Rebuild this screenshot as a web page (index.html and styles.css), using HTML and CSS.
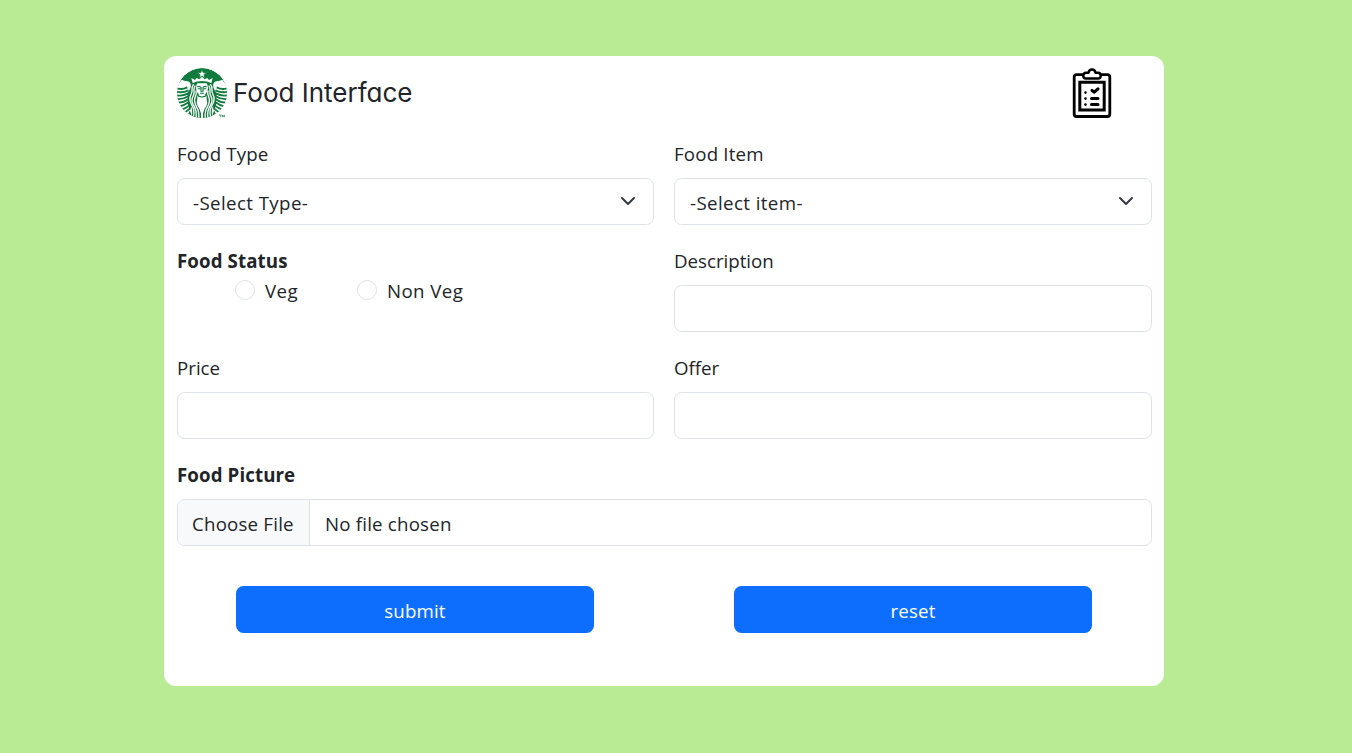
FILE: index.html
```html
<!DOCTYPE html>
<html lang="en">
<head>
<meta charset="utf-8">
<title>Food Interface</title>
<link rel="stylesheet" href="styles.css">
</head>
<body>
<form class="card">
  <header class="header">
    <svg class="logo" viewBox="0 0 150 150" aria-hidden="true">
      <defs>
        <clipPath id="disc"><circle cx="75" cy="75" r="75"/></clipPath>
        <!-- Left half of the siren, mirrored for the right half -->
        <g id="half">
          <path fill="#fff" d="M0 50Q10 44 14 35Q20 38 32 40Q44 44 41 58Q37 69 31 76L33 112L45 145L75 150V80L60 80L28 150L0 130Z"/>
          <g fill="none" stroke="#117a3d" stroke-width="5.4">
            <path d="M0 61Q16 66 31 58M-2 71Q15 76 35 67M0 82Q17 85 34 76M0 93Q18 95 34 85M3 104Q20 104 34 94M8 115Q23 112 35 103M14 125Q26 121 37 112M22 134Q31 129 39 121"/>
          </g>
          <path fill="#117a3d" d="M50 43C37 56 45 65 38 78C30 91 36 105 43 115Q48 130 43 150H72V136Q70 124 62 114Q57 104 61 93L62 45Z"/>
          <g fill="none" stroke="#fff" stroke-width="3.9" stroke-linecap="round">
            <path d="M49 50C40 62 50 67 42 80C34 93 40 104 46 114Q54 130 49 146"/>
            <path d="M54 54C46 67 56 73 48 85C41 98 47 108 53 118Q60 132 57 150"/>
            <path d="M57 69C61 81 51 88 53 99C53 110 60 118 63 126Q67 137 65 150"/>
          </g>
          <path fill="#fff" d="M75 46H61Q57 51 57 61Q59 78 75 85Z"/>
          <path fill="none" stroke="#117a3d" stroke-width="3.2" d="M61 57Q66 53 71 57M62 62H70M72 57V70H76M69 76H76"/>
          <path fill="none" stroke="#117a3d" stroke-width="3.4" d="M60 80Q65 87 75 87"/>
          <path fill="#fff" d="M75 26L67 34L59 30L54 36L43 30L47 45Q60 39 75 39Z"/>
        </g>
      </defs>
      <g clip-path="url(#disc)">
        <circle cx="75" cy="75" r="75" fill="#117a3d"/>
        <use href="#half"/>
        <use href="#half" transform="translate(150 0) scale(-1 1)"/>
        <path fill="#fff" stroke="#117a3d" stroke-width="2" d="M75 4L78.5 14H89L80.5 20L84 30L75 24L66 30L69.5 20L61 14H71.5Z"/>
      </g>
      <path fill="none" stroke="#117a3d" stroke-width="2" d="M126 141H134M130 141V148M136 148V141L139 146L142 141V148"/>
    </svg>
    <h1 class="title">Food Interface</h1>
    <svg class="clipboard" viewBox="0 0 40 50" fill="none" stroke="#000" aria-hidden="true">
      <path stroke-width="2.8" stroke-linejoin="round" d="M11 6.6H4.5Q2.2 6.6 2.2 9V46Q2.2 48.5 4.5 48.5H35.5Q37.8 48.5 37.8 46V9Q37.8 6.6 35.5 6.6H29"/>
      <path stroke-width="2.5" stroke-linejoin="round" d="M14 4.7H16.5Q17.2 1.5 20 1.5T23.5 4.7H26Q28.7 4.7 28.7 7.7T26 10.5H14Q11.3 10.5 11.3 7.7T14 4.7Z"/>
      <path stroke-width="3" d="M7.8 14.2H32.2V42H7.8Z"/>
      <path stroke-width="2.6" stroke-linecap="round" d="M13.5 24.5V24.6M13.5 30.5V30.6M13.5 36.5V36.6"/>
      <path stroke-width="3" stroke-linecap="round" d="M19.5 30.5H26M19.5 36.5H26"/>
      <path stroke-width="3.1" stroke-linecap="round" stroke-linejoin="round" d="M20 22.5L22.3 24.2L26 20.8"/>
    </svg>
  </header>
  <div class="grid">
    <div class="field">
      <span class="label spaced">Food Type</span>
      <div class="control select"><span>-Select Type-</span><svg class="chevron" viewBox="0 0 16 16"><path d="m2 5 6 6 6-6"/></svg></div>
    </div>
    <div class="field">
      <span class="label spaced">Food Item</span>
      <div class="control select"><span>-Select item-</span><svg class="chevron" viewBox="0 0 16 16"><path d="m2 5 6 6 6-6"/></svg></div>
    </div>
    <div class="field">
      <span class="label bold">Food Status</span>
      <div class="radios">
        <label class="radio"><input type="radio" name="status"><span>Veg</span></label>
        <label class="radio"><input type="radio" name="status"><span>Non Veg</span></label>
      </div>
    </div>
    <div class="field">
      <label class="label" for="description">Description</label>
      <input class="control" id="description" type="text">
    </div>
    <div class="field">
      <label class="label" for="price">Price</label>
      <input class="control" id="price" type="text">
    </div>
    <div class="field">
      <label class="label" for="offer">Offer</label>
      <input class="control" id="offer" type="text">
    </div>
    <div class="field wide">
      <span class="label bold">Food Picture</span>
      <div class="control file"><span class="choose">Choose File</span><span class="filename">No file chosen</span></div>
    </div>
  </div>
  <div class="actions">
    <button class="button" type="button">submit</button>
    <button class="button" type="button">reset</button>
  </div>
</form>
</body>
</html>
```
FILE: styles.css
```css
* { box-sizing: border-box; }
body {
  margin: 0;
  padding: 56px 188px 67px 164px;
  background: #b8eb94;
  color: #212529;
  font: 18.7px/30px "Open Sans", "Noto Sans", sans-serif;
}
.card {
  width: 1000px;
  height: 630px;
  padding: 12px 12px 0 13px;
  border-radius: 12px;
  background: #fff;
}
.header { display: flex; height: 50px; margin-bottom: 21px; }
.logo { width: 50px; height: 50px; overflow: visible; }
.title {
  margin: 0 0 0 6px;
  font: 400 26px/50px Inter, sans-serif;
  font-feature-settings: "cv11";
}
.clipboard { width: 40px; height: 50px; margin: 0 40px 0 auto; }
.grid { display: grid; grid-template-columns: 477px 478px; gap: 21px 20px; }
.field { height: 86px; }
.wide { grid-column: 1 / -1; }
.label { display: block; height: 30px; white-space: nowrap; }
.spaced { letter-spacing: 0.17px; }
.bold { font-weight: 700; letter-spacing: 0.1px; }
.control {
  display: flex;
  align-items: center;
  width: 100%;
  height: 47px;
  margin: 9px 0 0;
  padding: 2px 15px 0;
  border: 1px solid #dee2e6;
  border-radius: 7.5px;
  background: #fff;
  font: inherit;
}
.select { justify-content: space-between; letter-spacing: 0.4px; }
.chevron { width: 16px; height: 16px; margin: -4px 2px 0 0; overflow: visible; fill: none; stroke: #343a40; stroke-width: 2; stroke-linecap: round; stroke-linejoin: round; }
.radios { display: flex; height: 30px; padding-left: 58px; }
.radio { display: flex; align-items: flex-start; white-space: nowrap; letter-spacing: 0.4px; }
.radio:first-child { width: 122px; }
.radio input { appearance: none; width: 20px; height: 20px; margin: 4px 10px 0 0; border: 1px solid #dee2e6; border-radius: 50%; background: #fff; }
.file { padding: 0; overflow: hidden; letter-spacing: 0.2px; }
.choose { width: 132px; height: 100%; padding: 9px 0 0 14px; border-right: 1px solid #dee2e6; background: #f8f9fa; line-height: 30px; white-space: nowrap; }
.filename { padding: 2px 0 0 15px; }
.actions { display: flex; justify-content: space-between; padding: 40px 60px 0 59px; }
.button { width: 358px; height: 47px; padding: 3px 0 0; border: 0; border-radius: 7.5px; background: #0d6efd; color: #fff; font: inherit; letter-spacing: 0.15px; }
```
